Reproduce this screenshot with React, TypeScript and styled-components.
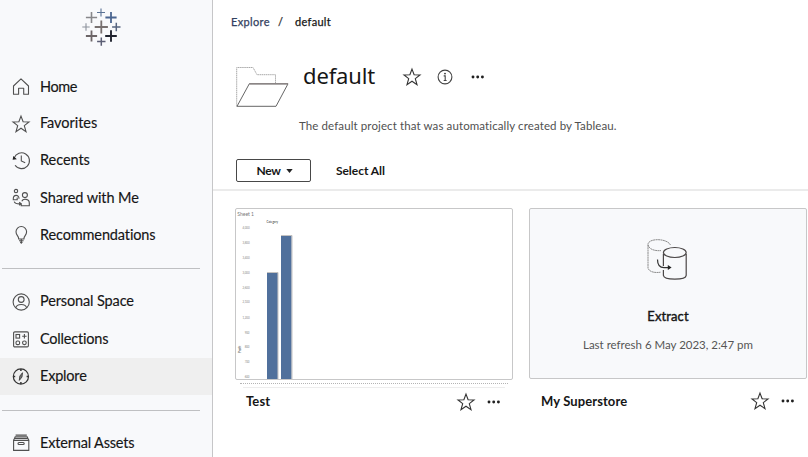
import React from "react";
import styled, { createGlobalStyle } from "styled-components";

const GlobalStyle = createGlobalStyle`
  * { box-sizing: border-box; }
  html, body { margin: 0; background: #fff; overflow: hidden; }
  body { font-family: Lato, "Noto Sans", sans-serif; color: #161616; }
  button { font: inherit; color: inherit; background: none; border: 0; padding: 0; }
  h1, h2, p { margin: 0; font-weight: 400; }
  svg { display: block; flex: none; overflow: visible; }
`;

const Page = styled.div`
  display: flex;
  width: 808px;
  height: 457px;
  overflow: hidden;
`;

const Sidebar = styled.aside`
  width: 213px;
  flex: none;
  background: #f8f9fb;
  border-right: 1px solid #c6c6c8;
`;

const LogoBox = styled.div`
  height: 68px;
  padding: 8px 0 0 82px;
`;

const NavItem = styled.a<{ $active?: boolean }>`
  display: flex;
  align-items: center;
  height: 37px;
  padding-left: 11px;
  background: ${(p) => (p.$active ? "#efefef" : "transparent")};
`;

const NavLabel = styled.span<{ $spacing: number; $low?: boolean }>`
  margin: ${(p) => (p.$low ? 0 : -2)}px 0 0 9px;
  font-size: 14.5px;
  line-height: 20px;
  white-space: nowrap;
  letter-spacing: ${(p) => p.$spacing}px;
  -webkit-text-stroke: 0.15px currentColor;
`;

const NavGroup = styled.nav<{ $top: number }>`
  padding-top: ${(p) => p.$top}px;
`;

const Divider = styled.hr`
  height: 1px;
  border: 0;
  margin: 0 12px 0 2px;
  background: #bfc0c2;
`;

const Main = styled.main`
  flex: 1;
  min-width: 0;
`;

const Header = styled.header`
  height: 191px;
  padding-left: 18px;
  border-bottom: 2px solid #ebebeb;
`;

const Breadcrumbs = styled.div`
  display: flex;
  height: 44px;
  padding-top: 14px;
  font-size: 11px;
  line-height: 16px;
  -webkit-text-stroke: 0.25px currentColor;
`;

const Crumb = styled.span<{ $link?: boolean }>`
  width: ${(p) => (p.$link ? "46px" : "auto")};
  color: ${(p) => (p.$link ? "#33425f" : "#161616")};
  letter-spacing: ${(p) => (p.$link ? 0.35 : 0.3)}px;
`;

const Slash = styled.span`
  width: 18px;
  padding-left: 1px;
  color: #333;
`;

const TitleRow = styled.div`
  display: flex;
  height: 64px;
  padding-left: 5px;
`;

const Title = styled.h1`
  width: 98px;
  margin: 16px 0 0 13px;
  font: 400 22px/30px "Noto Sans", sans-serif;
  letter-spacing: -0.15px;
`;

const TitleActions = styled.div`
  display: flex;
  align-items: center;
  height: 20px;
  margin: 23px 0 0 1px;
  gap: 15px;

  & > :last-child { margin-left: 3px; }
`;

const Description = styled.p`
  height: 51px;
  padding: 9px 0 0 68px;
  font-size: 11.5px;
  line-height: 18px;
  letter-spacing: 0.11px;
  color: #505050;
`;

const Toolbar = styled.div`
  display: flex;
  align-items: center;
  padding-left: 5px;
  gap: 25px;
  font-size: 12px;
  font-weight: 700;
`;

const NewButton = styled.button`
  display: flex;
  align-items: center;
  justify-content: center;
  gap: 5px;
  width: 75px;
  height: 23px;
  padding-left: 2px;
  letter-spacing: -0.3px;
  border: 1px solid #484848;
  border-radius: 2px;
`;

const SelectAll = styled.button`
  letter-spacing: -0.05px;
`;

const Cards = styled.section`
  display: flex;
  gap: 16px;
  padding: 17px 0 0 22px;
`;

const Card = styled.article`
  width: 278px;
  flex: none;
`;

const Preview = styled.div<{ $empty?: boolean }>`
  height: ${(p) => (p.$empty ? 171 : 172)}px;
  border: 1px solid #c7c7c8;
  border-radius: 2px;
  background: ${(p) => (p.$empty ? "#f8f9fb" : "#fff")};
`;

const StackEdges = styled.div`
  height: 8px;
  padding: 3px 5px 0;
`;

const Edge = styled.div<{ $inset?: boolean }>`
  height: 4px;
  margin: 0 ${(p) => (p.$inset ? 3 : 0)}px;
  border-top: 1px ${(p) => (p.$inset ? "solid #ededed" : "dotted #b4b4b4")};
`;

const ExtractPreview = styled(Preview)`
  display: flex;
  flex-direction: column;
  align-items: center;
  padding-top: 28px;
`;

const ExtractTitle = styled.h2`
  margin-top: 25px;
  font-size: 13px;
  line-height: 20px;
  letter-spacing: 0.1px;
  -webkit-text-stroke: 0.4px currentColor;
`;

const ExtractInfo = styled.p`
  margin-top: 10px;
  font-size: 11.5px;
  line-height: 18px;
  letter-spacing: -0.01px;
  color: #555;
`;

const CardFooter = styled.footer<{ $top: number }>`
  display: flex;
  align-items: center;
  height: 22px;
  margin-top: ${(p) => p.$top}px;
  padding: 0 12px;
`;

const CardName = styled.span<{ $raised?: boolean }>`
  flex: 1;
  margin: ${(p) => (p.$raised ? "-2px 0 0 -1px" : "0")};
  font-size: 13px;
  font-weight: 700;
  letter-spacing: 0.1px;
`;

const CardActions = styled.div`
  display: flex;
  align-items: center;
  gap: 11px;
`;

/* [x, y, half length, stroke width, colour] for every cross of the logo */
const crosses: [number, number, number, number, string][] = [
  [19, 4.5, 4, 1.1, "#5a7294"],
  [9.5, 9.5, 5.6, 1.6, "#87878a"],
  [29, 9.5, 5.6, 1.8, "#4a6590"],
  [4, 19, 3.7, 1.1, "#8b929c"],
  [19.3, 19, 6.6, 1.8, "#77706f"],
  [34.3, 19, 4.2, 1.5, "#56647f"],
  [9.5, 28, 5.6, 1.8, "#6c6567"],
  [29, 28, 5.8, 1.9, "#20232f"],
  [19.3, 33.6, 4.2, 1.5, "#5b5e74"],
];

const Logo = () => (
  <svg width="38" height="38" viewBox="0 0 38 38" fill="none">
    {crosses.map(([x, y, r, w, c]) => (
      <path key={`${x}-${y}`} d={`M${x - r} ${y}H${x + r}M${x} ${y - r}V${y + r}`} stroke={c} strokeWidth={w} />
    ))}
  </svg>
);

const Glyph = ({ children, size = 20, dark = false }: { children: React.ReactNode; size?: number; dark?: boolean }) => (
  <svg width={size} height={size} viewBox="0 0 20 20" fill="none" stroke={dark ? "#333" : "#505050"} strokeWidth="1.1">
    {children}
  </svg>
);

const starPath = "M10 2.1L12.1 7.8L18 8L13.3 11.6L15 17.6L10 14.2L5 17.6L6.7 11.6L2 8L7.9 7.8Z";

const icons = {
  home: <path d="M2.5 9L10 1.8L17.5 9V17.3H12.7V11.2H7.6V17.3H2.5Z" strokeLinejoin="round" />,
  star: <path d={starPath} />,
  recents: (
    <>
      <path d="M3.1 7.1A7.9 7.9 0 1 1 4.1 14.3" />
      <path d="M10.3 4.5V10L14.2 11.8" />
      <path d="M2.3 8.1L2.7 6.1L4.6 7.8Z" fill="#222" stroke="#222" />
    </>
  ),
  shared: (
    <>
      <circle cx="5" cy="3.1" r="1.7" />
      <path d="M8 10.7C8 6.3 2.3 6.3 2.3 10.7V11.8H6.2V9.5" />
      <circle cx="13.9" cy="7.1" r="2.5" />
      <path d="M10.8 13.2C12 10.4 18.3 10.6 18.3 15V17.7H10.2V16" />
      <path d="M3.2 13.6C4 15.6 5.6 16 9.5 15.8M8.2 14.2L10.2 15.8L8.2 17.2" />
    </>
  ),
  bulb: (
    <>
      <path d="M7.7 14C7.7 10.8 5 10.5 5 6.8A5.3 5.3 0 0 1 15.6 6.8C15.6 10.5 12.9 10.8 12.9 14Z" />
      <path d="M8 15.7H12.6M9.1 17.4H11.5M10.3 14V18.7" />
    </>
  ),
  person: (
    <>
      <circle cx="10.2" cy="10" r="8.1" />
      <circle cx="10.2" cy="7.5" r="2.9" />
      <path d="M4.7 15.9C5.8 11.3 14.6 11.3 15.7 15.9" />
    </>
  ),
  collections: (
    <>
      <rect x="2.6" y="1.9" width="14.8" height="15" rx="1.2" />
      <rect x="5" y="4.5" width="3.6" height="3.6" />
      <path d="M11.2 6.3H15.6M13.4 4.1V8.5" />
      <rect x="5" y="11" width="3.6" height="3.6" rx="1.4" />
      <rect x="11.6" y="11" width="3.6" height="3.6" rx="1.6" />
    </>
  ),
  compass: (
    <>
      <circle cx="9.9" cy="9.5" r="7.6" strokeWidth="1.2" />
      <path d="M9.9 2.1V4M9.9 15V16.9M2.5 9.5H4.2M15.6 9.5H17.3" strokeWidth="1.5" />
      <path d="M11.5 5.7L11 10L8.3 13.4L8.8 9.1Z" fill="#777" strokeWidth="0.8" />
    </>
  ),
  assets: (
    <>
      <path d="M2.6 7.4H17.8V17.4H2.6Z" />
      <path d="M2.6 7.4L4.2 3.7H16.2L17.8 7.4M4.6 2.1H15.8M4 5.4H16.4" />
      <rect x="7" y="9.5" width="6.2" height="2" rx="1" />
    </>
  ),
};

const Star = () => <Glyph dark>{icons.star}</Glyph>;

const Dots = () => (
  <svg width="14" height="4" viewBox="0 0 14 4" fill="#202020">
    <circle cx="2" cy="2" r="1.45" />
    <circle cx="6.7" cy="2" r="1.45" />
    <circle cx="11.4" cy="2" r="1.45" />
  </svg>
);

const Info = () => (
  <svg width="16" height="16" viewBox="0 0 16 16" fill="none" stroke="#444" strokeWidth="1.1">
    <circle cx="8" cy="8" r="6.9" />
    <path d="M6.7 6.9H8.2V11.5M6.7 11.5H9.6" />
    <circle cx="8" cy="4.6" r="0.9" fill="#333" stroke="none" />
  </svg>
);

const Folder = () => (
  <svg width="54" height="64" viewBox="0 0 54 64" fill="none">
    <path d="M.7 62.5V23.5H17L21 30.7H39.5V39.5" stroke="#aaa" strokeDasharray="1.4 .5" />
    <path d="M13.3 39.8H52L40 62.3H1Z" fill="#fff" stroke="#666" />
    <path d="M13.3 39.8H52" stroke="#8b8585" strokeWidth="1.4" />
  </svg>
);

const Cylinders = () => (
  <svg width="42" height="44" viewBox="0 0 42 44" fill="none">
    <path d="M23.5 8C20 1 1 1 1 7.5V31C2 35 8 36.1 13.5 35.2M1 7.8C2 12.5 8 14.1 14 13.6" stroke="#8c8c8c" strokeDasharray="2 .4" />
    <path d="M16.4 16.8V38.4C17 43.4 38.7 43.4 39.2 38.4V16.8" fill="#f8f9fb" stroke="#4b4747" strokeWidth="1.2" />
    <ellipse cx="27.8" cy="15.5" rx="11.4" ry="5" fill="#f8f9fb" stroke="#4b4747" strokeWidth="1.2" />
    <path d="M13.5 31H18" stroke="#f8f9fb" strokeWidth="4" />
    <path d="M10.5 22.5C10.5 28 12.5 30.6 17 30.6H22" stroke="#333" strokeWidth="1.2" />
    <path d="M20.8 28.1L24.6 30.6L20.8 33.1Z" fill="#222" />
  </svg>
);

const ticks = ["4,000", "3,800", "3,400", "3,000", "2,600", "2,100", "1,200", "900", "800", "700", "600"];

const Chart = () => (
  <svg width="276" height="170" viewBox="0 0 276 170" fontFamily="Lato, sans-serif">
    <text x="1.3" y="6.8" fontSize="5" fill="#777">Sheet 1</text>
    <text x="30.5" y="13.8" fontSize="2.8" fill="#222" textLength="11.5">Category</text>
    {ticks.map((t, i) => (
      <text key={t} x="13.5" y={20.3 + i * 14.8 + (i > 5 ? 0.6 : 0)} fontSize="2.8" fill="#858585" textAnchor="end">{t}</text>
    ))}
    <text transform="translate(5 144) rotate(-90)" fontSize="3" fill="#222">Profit</text>
    <path d="M31 64H41.7V170H31ZM45 27H55.5V170H45Z" fill="#50709c" />
    <path d="M31 63.5H42V170M45 26.5H56V170" fill="none" stroke="#aaa8a6" strokeWidth=".7" />
  </svg>
);

type NavRowProps = { icon: keyof typeof icons; label: string; spacing: number; active?: boolean; low?: boolean };

const NavRow = ({ icon, label, spacing, active, low }: NavRowProps) => (
  <NavItem $active={active}>
    <Glyph dark={active}>{icons[icon]}</Glyph>
    <NavLabel $spacing={spacing} $low={low}>{label}</NavLabel>
  </NavItem>
);

const Actions = () => (
  <CardActions>
    <Star />
    <Dots />
  </CardActions>
);

export default function App() {
  return (
    <Page>
      <GlobalStyle />
      <Sidebar>
        <LogoBox><Logo /></LogoBox>
        <NavGroup $top={0}>
          <NavRow icon="home" label="Home" spacing={-0.4} low />
          <NavRow icon="star" label="Favorites" spacing={-0.05} />
          <NavRow icon="recents" label="Recents" spacing={-0.05} />
          <NavRow icon="shared" label="Shared with Me" spacing={-0.08} low />
          <NavRow icon="bulb" label="Recommendations" spacing={-0.13} low />
        </NavGroup>
        <NavGroup $top={15}>
          <Divider />
        </NavGroup>
        <NavGroup $top={14}>
          <NavRow icon="person" label="Personal Space" spacing={-0.13} />
        </NavGroup>
        <NavGroup $top={1}>
          <NavRow icon="collections" label="Collections" spacing={-0.2} />
          <NavRow icon="compass" label="Explore" spacing={-0.2} active />
        </NavGroup>
        <NavGroup $top={15}>
          <Divider />
        </NavGroup>
        <NavGroup $top={13}>
          <NavRow icon="assets" label="External Assets" spacing={-0.18} low />
        </NavGroup>
      </Sidebar>
      <Main>
        <Header>
          <Breadcrumbs>
            <Crumb $link>Explore</Crumb>
            <Slash>/</Slash>
            <Crumb>default</Crumb>
          </Breadcrumbs>
          <TitleRow>
            <Folder />
            <Title>default</Title>
            <TitleActions>
              <Star />
              <Info />
              <Dots />
            </TitleActions>
          </TitleRow>
          <Description>The default project that was automatically created by Tableau.</Description>
          <Toolbar>
            <NewButton>
              New
              <svg width="7" height="4" viewBox="0 0 8 5"><path d="M0 0H8L4 5Z" fill="#222" /></svg>
            </NewButton>
            <SelectAll>Select All</SelectAll>
          </Toolbar>
        </Header>
        <Cards>
          <Card>
            <Preview><Chart /></Preview>
            <StackEdges>
              <Edge />
              <Edge $inset />
            </StackEdges>
            <CardFooter $top={3}>
              <CardName $raised>Test</CardName>
              <Actions />
            </CardFooter>
          </Card>
          <Card>
            <ExtractPreview $empty>
              <Cylinders />
              <ExtractTitle>Extract</ExtractTitle>
              <ExtractInfo>Last refresh 6 May 2023, 2:47 pm</ExtractInfo>
            </ExtractPreview>
            <CardFooter $top={11}>
              <CardName>My Superstore</CardName>
              <Actions />
            </CardFooter>
          </Card>
        </Cards>
      </Main>
    </Page>
  );
}
